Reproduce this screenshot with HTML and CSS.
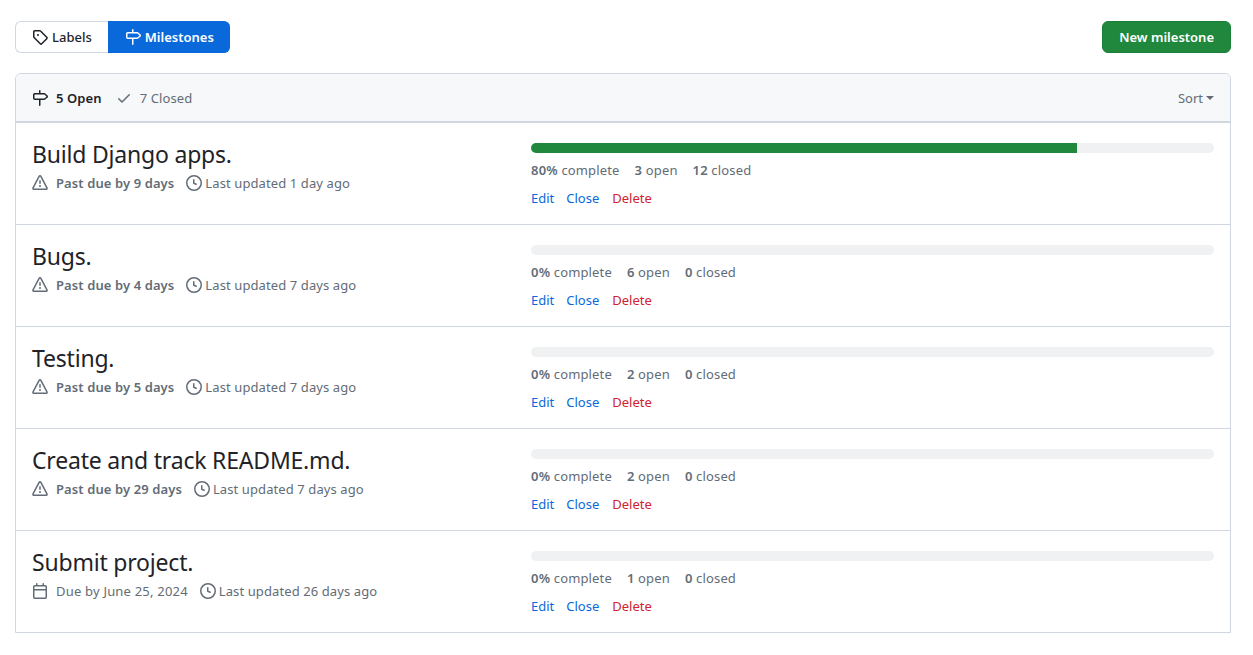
FILE: index.html
```html
<!DOCTYPE html>
<html lang="en">
<head>
    <meta charset="UTF-8">
    <title>Milestones</title>
    <link rel="stylesheet" href="styles.css">
</head>
<body>
    <svg class="defs" width="0" height="0">
        <symbol id="i-tag" viewBox="0 0 16 16"><path d="M1 7.775V2.75C1 1.784 1.784 1 2.75 1h5.025c.464 0 .91.184 1.238.513l6.25 6.25a1.75 1.75 0 0 1 0 2.474l-5.026 5.026a1.75 1.75 0 0 1-2.474 0l-6.25-6.25A1.752 1.752 0 0 1 1 7.775Zm1.5 0c0 .066.026.13.073.177l6.25 6.25a.25.25 0 0 0 .354 0l5.025-5.025a.25.25 0 0 0 0-.354l-6.25-6.25a.25.25 0 0 0-.177-.073H2.75a.25.25 0 0 0-.25.25ZM6 5a1 1 0 1 1 0 2 1 1 0 0 1 0-2Z"/></symbol>
        <symbol id="i-milestone" viewBox="0 0 16 16"><path d="M7.75 0a.75.75 0 0 1 .75.75V3h3.634c.414 0 .814.147 1.13.414l2.07 1.75a1.75 1.75 0 0 1 0 2.672l-2.07 1.75a1.75 1.75 0 0 1-1.13.414H8.5v5.25a.75.75 0 0 1-1.5 0V10H2.75A1.75 1.75 0 0 1 1 8.25v-3.5C1 3.784 1.784 3 2.75 3H7V.75A.75.75 0 0 1 7.75 0Zm4.384 8.5a.25.25 0 0 0 .161-.06l2.07-1.75a.248.248 0 0 0 0-.38l-2.07-1.75a.25.25 0 0 0-.161-.06H2.75a.25.25 0 0 0-.25.25v3.5c0 .138.112.25.25.25h9.384Z"/></symbol>
        <symbol id="i-check" viewBox="0 0 16 16"><path d="M13.78 4.22a.75.75 0 0 1 0 1.06l-7.25 7.25a.75.75 0 0 1-1.06 0L2.22 9.28a.751.751 0 0 1 .018-1.042.751.751 0 0 1 1.042-.018L6 10.94l6.72-6.72a.75.75 0 0 1 1.06 0Z"/></symbol>
        <symbol id="i-alert" viewBox="0 0 16 16"><path d="M6.457 1.047c.659-1.234 2.427-1.234 3.086 0l6.082 11.378A1.75 1.75 0 0 1 14.082 15H1.918a1.75 1.75 0 0 1-1.543-2.575Zm1.763.707a.25.25 0 0 0-.44 0L1.698 13.132a.25.25 0 0 0 .22.368h12.164a.25.25 0 0 0 .22-.368Zm.53 3.996v2.5a.75.75 0 0 1-1.5 0v-2.5a.75.75 0 0 1 1.5 0ZM9 11a1 1 0 1 1-2 0 1 1 0 0 1 2 0Z"/></symbol>
        <symbol id="i-clock" viewBox="0 0 16 16"><path d="M8 0a8 8 0 1 1 0 16A8 8 0 0 1 8 0ZM1.5 8a6.5 6.5 0 1 0 13 0 6.5 6.5 0 0 0-13 0Zm7-3.25v2.992l2.028.812a.75.75 0 0 1-.557 1.392l-2.5-1A.751.751 0 0 1 7 8.25v-3.5a.75.75 0 0 1 1.5 0Z"/></symbol>
        <symbol id="i-calendar" viewBox="0 0 16 16"><path d="M4.75 0a.75.75 0 0 1 .75.75V2h5V.75a.75.75 0 0 1 1.5 0V2h1.25c.966 0 1.75.784 1.75 1.75v10.5A1.75 1.75 0 0 1 13.25 16H2.75A1.75 1.75 0 0 1 1 14.25V3.75C1 2.784 1.784 2 2.75 2H4V.75A.75.75 0 0 1 4.75 0ZM2.5 7.5v6.75c0 .138.112.25.25.25h10.5a.25.25 0 0 0 .25-.25V7.5Zm10.75-4H2.75a.25.25 0 0 0-.25.25V6h11V3.75a.25.25 0 0 0-.25-.25Z"/></symbol>
    </svg>

    <div class="topbar">
        <nav class="tabs">
            <a class="tab" href="#"><svg class="icon"><use href="#i-tag"/></svg>Labels</a>
            <a class="tab selected" href="#"><svg class="icon"><use href="#i-milestone"/></svg>Milestones</a>
        </nav>
        <a class="new-btn" href="#">New milestone</a>
    </div>

    <div class="box">
        <div class="box-header">
            <a class="state open" href="#"><svg class="icon"><use href="#i-milestone"/></svg>5 Open</a>
            <a class="state" href="#"><svg class="icon"><use href="#i-check"/></svg>7 Closed</a>
            <span class="sort">Sort<i class="caret"></i></span>
        </div>

        <div class="row">
            <div class="left">
                <h2 class="title">Build Django apps.</h2>
                <div class="meta">
                    <span class="due"><svg class="icon"><use href="#i-alert"/></svg><strong>Past due by 9 days</strong></span>
                    <span class="updated"><svg class="icon"><use href="#i-clock"/></svg>Last updated 1 day ago</span>
                </div>
            </div>
            <div class="right">
                <div class="bar"><div class="fill" style="width: 80%"></div></div>
                <div class="stats"><span><b>80%</b> complete</span><span><b>3</b> open</span><span><b>12</b> closed</span></div>
                <div class="actions"><a href="#">Edit</a><a href="#">Close</a><a class="danger" href="#">Delete</a></div>
            </div>
        </div>

        <div class="row">
            <div class="left">
                <h2 class="title">Bugs.</h2>
                <div class="meta">
                    <span class="due"><svg class="icon"><use href="#i-alert"/></svg><strong>Past due by 4 days</strong></span>
                    <span class="updated"><svg class="icon"><use href="#i-clock"/></svg>Last updated 7 days ago</span>
                </div>
            </div>
            <div class="right">
                <div class="bar"></div>
                <div class="stats"><span><b>0%</b> complete</span><span><b>6</b> open</span><span><b>0</b> closed</span></div>
                <div class="actions"><a href="#">Edit</a><a href="#">Close</a><a class="danger" href="#">Delete</a></div>
            </div>
        </div>

        <div class="row">
            <div class="left">
                <h2 class="title">Testing.</h2>
                <div class="meta">
                    <span class="due"><svg class="icon"><use href="#i-alert"/></svg><strong>Past due by 5 days</strong></span>
                    <span class="updated"><svg class="icon"><use href="#i-clock"/></svg>Last updated 7 days ago</span>
                </div>
            </div>
            <div class="right">
                <div class="bar"></div>
                <div class="stats"><span><b>0%</b> complete</span><span><b>2</b> open</span><span><b>0</b> closed</span></div>
                <div class="actions"><a href="#">Edit</a><a href="#">Close</a><a class="danger" href="#">Delete</a></div>
            </div>
        </div>

        <div class="row">
            <div class="left">
                <h2 class="title">Create and track README.md.</h2>
                <div class="meta">
                    <span class="due"><svg class="icon"><use href="#i-alert"/></svg><strong>Past due by 29 days</strong></span>
                    <span class="updated"><svg class="icon"><use href="#i-clock"/></svg>Last updated 7 days ago</span>
                </div>
            </div>
            <div class="right">
                <div class="bar"></div>
                <div class="stats"><span><b>0%</b> complete</span><span><b>2</b> open</span><span><b>0</b> closed</span></div>
                <div class="actions"><a href="#">Edit</a><a href="#">Close</a><a class="danger" href="#">Delete</a></div>
            </div>
        </div>

        <div class="row">
            <div class="left">
                <h2 class="title">Submit project.</h2>
                <div class="meta">
                    <span class="due"><svg class="icon"><use href="#i-calendar"/></svg>Due by June 25, 2024</span>
                    <span class="updated"><svg class="icon"><use href="#i-clock"/></svg>Last updated 26 days ago</span>
                </div>
            </div>
            <div class="right">
                <div class="bar"></div>
                <div class="stats"><span><b>0%</b> complete</span><span><b>1</b> open</span><span><b>0</b> closed</span></div>
                <div class="actions"><a href="#">Edit</a><a href="#">Close</a><a class="danger" href="#">Delete</a></div>
            </div>
        </div>
    </div>
</body>
</html>
```
FILE: styles.css
```css
body {
    margin: 0;
    padding: 21px 22px 22px 15px;
    font-family: "Noto Sans", "Open Sans", sans-serif;
    font-size: 13px;
    line-height: 20px;
    color: #1f2328;
    background: #fff;
}
a {
    text-decoration: none;
    color: inherit;
}
.defs {
    position: absolute;
}
.icon {
    width: 16px;
    height: 16px;
    fill: currentColor;
    flex: none;
}

/* top bar */
.topbar {
    display: flex;
    justify-content: space-between;
    margin-bottom: 20px;
}
.tabs {
    display: flex;
}
.tab {
    display: flex;
    align-items: center;
    gap: 4px;
    height: 32px;
    box-sizing: border-box;
    padding: 0 16px;
    border: 1px solid #d1d7e0;
    border-right: 0;
    border-radius: 6px 0 0 6px;
    font-weight: 500;
}
.tab.selected {
    color: #fff;
    background: #0969da;
    border-color: #0969da;
    border-radius: 0 6px 6px 0;
    font-weight: 600;
}
.new-btn {
    display: flex;
    align-items: center;
    height: 32px;
    box-sizing: border-box;
    padding: 0 16px;
    color: #fff;
    font-weight: 600;
    background: #1f883d;
    border: 1px solid #1a7f37;
    border-radius: 6px;
}

/* list box */
.box {
    border: 1px solid #d1d7e0;
    border-radius: 6px 6px 0 0;
}
.box-header {
    display: flex;
    align-items: center;
    height: 47px;
    padding: 0 16px;
    background: #f6f8fa;
    border-bottom: 2px solid #d1d7e0;
    border-radius: 6px 6px 0 0;
}
.state {
    display: flex;
    align-items: center;
    gap: 8px;
    margin-right: 14px;
    color: #636c76;
    letter-spacing: .1px;
}
.state.open {
    color: #1f2328;
    font-weight: 600;
}
.sort {
    margin-left: auto;
    color: #636c76;
    display: flex;
    align-items: center;
}
.caret {
    margin-left: 3px;
    margin-top: 1px;
    border-top: 4px solid currentColor;
    border-left: 4px solid transparent;
    border-right: 4px solid transparent;
}

.row {
    display: flex;
    height: 101px;
    border-bottom: 1px solid #d1d7e0;
}
.row:last-child {
    border-bottom: 0;
}
.left {
    width: 499px;
    padding: 16px 0 0 16px;
}
.title {
    margin: 0;
    font-size: 23px;
    line-height: 30px;
    letter-spacing: -.2px;
    font-weight: 400;
}
.meta {
    display: flex;
    gap: 12px;
    margin-top: 4px;
    color: #636c76;
    letter-spacing: .1px;
}
.meta strong {
    font-weight: 600;
}
.meta span {
    display: flex;
    align-items: center;
}
.meta .due {
    letter-spacing: .2px;
}
.meta .due strong {
    letter-spacing: .1px;
}
.meta .due .icon {
    margin-right: 8px;
}
.meta .updated .icon {
    margin-right: 3px;
}
.right {
    flex: 1;
    padding: 20px 16px 0 0;
}
.bar {
    height: 10px;
    background: #f0f1f2;
    border-radius: 5px;
    overflow: hidden;
}
.fill {
    height: 100%;
    background: #1f883d;
}
.stats {
    display: flex;
    gap: 15px;
    margin-top: 7px;
    color: #636c76;
    letter-spacing: .15px;
}
.stats b {
    font-weight: 600;
    letter-spacing: .2px;
}
.actions {
    display: flex;
    gap: 12px;
    margin-top: 8px;
}
.actions a {
    color: #0969da;
}
.actions a.danger {
    color: #cf222e;
    margin-left: 1px;
}
```
